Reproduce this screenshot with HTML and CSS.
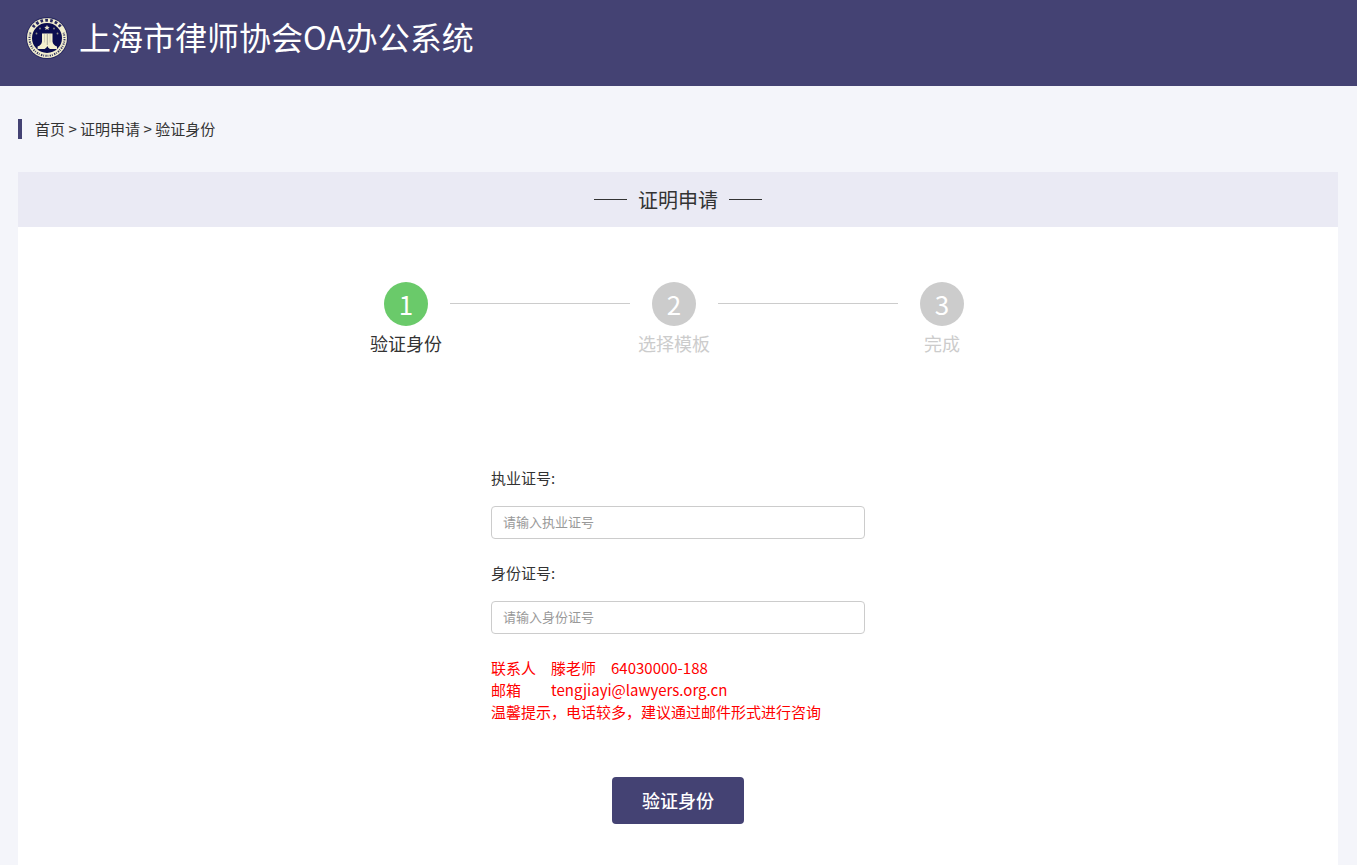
FILE: index.html
```
<!DOCTYPE html>
<html lang="zh-CN">
<head>
    <meta charset="UTF-8">
    <meta name="viewport" content="width=device-width, initial-scale=1.0">
    <title>上海市律师协会OA办公系统</title>
    <link rel="stylesheet" href="styles.css">
</head>
<body>
    <header class="header">
        <svg class="logo" viewBox="0 0 44 44" aria-hidden="true">
            <circle cx="22" cy="22" r="21" fill="#26275f" />
            <circle cx="22" cy="22" r="20" fill="#f1edce" />
            <path d="M5.500 16.500 A17.500 17.500 0 1 0 38.500 16.500" fill="none" stroke="#34355f" stroke-width="2" stroke-dasharray="1.300 1 .8 1.400" />
            <path d="M8 11.200 A17.500 17.500 0 0 1 36 11.200" fill="none" stroke="#26275f" stroke-width="3" stroke-dasharray="2.600 2.200" />
            <circle cx="22" cy="22" r="15" fill="#0b0d50" />
            <path d="M17 17.500h10.500v8q.5 3.500 4.500 5v2.500h-7q-2-1-2.700-3q-.7 2-2.700 3h-7v-2.500q4-1.500 4.400-5z" fill="#f4efcf" />
            <path d="M19.500 18v8.500M25 18v8.500" stroke="#c9c5b4" stroke-width=".8" />
            <path d="M22.300 18v11" stroke="#aaa89d" stroke-width="1" />
            <path d="M22 9l.8 1.700 1.900.2-1.400 1.300.4 1.900-1.700-1-1.700 1 .4-1.900-1.400-1.300 1.900-.2z" fill="#e6e2c6" />
            <g fill="#8f8d86">
                <circle cx="15" cy="12.500" r=".9" />
                <circle cx="29" cy="12.500" r=".9" />
                <circle cx="11.500" cy="17.500" r=".9" />
                <circle cx="32.500" cy="17.500" r=".9" />
            </g>
        </svg>
        <h1>上海市律师协会OA办公系统</h1>
    </header>

    <main class="main">
        <nav class="breadcrumb">
            <a href="#">首页</a> &gt; <a href="#">证明申请</a> &gt; <a href="#">验证身份</a>
        </nav>

        <section class="panel">
            <h2 class="panel-title">证明申请</h2>

            <ol class="steps">
                <li class="step active"><span class="num">1</span>验证身份</li>
                <li class="line"></li>
                <li class="step"><span class="num">2</span>选择模板</li>
                <li class="line"></li>
                <li class="step"><span class="num">3</span>完成</li>
            </ol>

            <form class="form">
                <label for="license-no">执业证号:</label>
                <input type="text" id="license-no" placeholder="请输入执业证号">
                <label for="id-no">身份证号:</label>
                <input type="text" id="id-no" placeholder="请输入身份证号">
                <p class="tips">
                    联系人&emsp;滕老师&emsp;64030000-188<br>
                    邮箱&emsp;&emsp;tengjiayi@lawyers.org.cn<br>
                    温馨提示，电话较多，建议通过邮件形式进行咨询
                </p>
                <button class="button" type="button">验证身份</button>
            </form>
        </section>
    </main>
</body>
</html>
```
FILE: styles.css
```
* {
    box-sizing: border-box;
}
body {
    margin: 0;
    min-height: 100vh;
    display: flex;
    flex-direction: column;
    background-color: #f4f5fa;
    color: #333;
    font-family: "Noto Sans CJK SC", sans-serif;
    font-size: 15px;
    line-height: 22px;
}
.header {
    display: flex;
    align-items: center;
    height: 86px;
    padding: 0 25px 10px;
    background-color: #444273;
    color: #fff;
}
.logo {
    width: 44px;
    height: 44px;
    margin-right: 10px;
}
h1 {
    margin: 0 0 4px;
    font-size: 32px;
    line-height: 44px;
    font-weight: 400;
}
.main {
    flex: 1;
    display: flex;
    flex-direction: column;
    padding: 33px 19px 0 18px;
}
.breadcrumb {
    margin-bottom: 33px;
    padding-left: 13px;
    border-left: 4px solid #444273;
    line-height: 20px;
}
.breadcrumb a {
    color: #333;
    text-decoration: none;
}
.panel {
    flex: 1;
    background-color: #fff;
}
.panel-title {
    display: flex;
    align-items: center;
    justify-content: center;
    gap: 11px;
    height: 55px;
    margin: 0;
    background-color: #eaeaf4;
    font-size: 20px;
    font-weight: 400;
}
.panel-title::before,
.panel-title::after {
    content: "";
    width: 33px;
    height: 1px;
    background-color: #333;
}
.steps {
    display: flex;
    justify-content: center;
    margin: 0;
    padding: 55px 8px 0 0;
    list-style: none;
}
.step {
    width: 88px;
    color: #ccc;
    font-size: 18px;
    line-height: 34px;
    text-align: center;
}
.num {
    display: block;
    width: 44px;
    height: 44px;
    margin: 0 auto;
    border-radius: 50%;
    background-color: #ccc;
    color: #fff;
    font-size: 26px;
    line-height: 44px;
}
.active {
    color: #333;
}
.active .num {
    background-color: #6aca6a;
}
.line {
    width: 180px;
    height: 1px;
    margin-top: 21px;
    background-color: #ccc;
}
.form {
    display: flex;
    flex-direction: column;
    width: 374px;
    margin: 0 auto;
    padding: 107px 0 41px;
}
.form input {
    height: 33px;
    margin: 17px 0 23px;
    padding: 0 11px 2px;
    border: 1px solid #ccc;
    border-radius: 4px;
    color: #333;
    font-family: inherit;
    font-size: 13px;
}
.form input::placeholder {
    color: #999;
}
.tips {
    margin: 0;
    color: #f00;
}
.button {
    align-self: center;
    width: 132px;
    height: 47px;
    margin-top: 54px;
    padding: 0 0 2px;
    border: none;
    border-radius: 4px;
    background-color: #444273;
    color: #fff;
    font-family: inherit;
    font-size: 18px;
    font-weight: 500;
    cursor: pointer;
}
```
